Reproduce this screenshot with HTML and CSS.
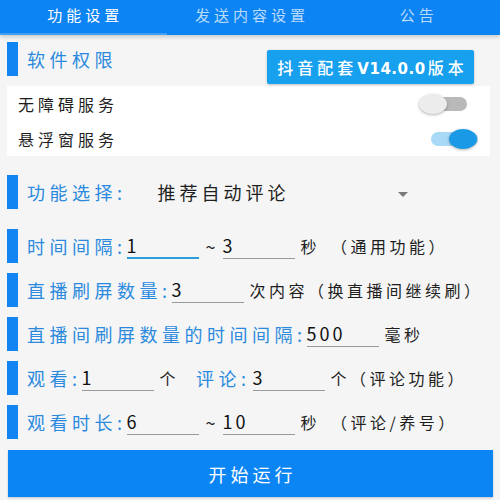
FILE: index.html
```html
<!DOCTYPE html>
<html lang="zh-CN">
<head>
<meta charset="utf-8">
<title>功能设置</title>
<link rel="stylesheet" href="styles.css">
</head>
<body>
<nav class="tabs">
  <div class="tab active">功能设置</div>
  <div class="tab">发送内容设置</div>
  <div class="tab">公告</div>
</nav>
<main class="main">
  <div class="section-head">
    <span class="bar"></span>
    <span class="label">软件权限</span>
    <button class="version-btn">抖音配套<span class="latin">V14.0.0</span>版本</button>
  </div>
  <div class="card">
    <div class="switch-row">
      <span class="switch-text">无障碍服务</span>
      <span class="switch off"><span class="track"></span><span class="thumb"></span></span>
    </div>
    <div class="switch-row">
      <span class="switch-text">悬浮窗服务</span>
      <span class="switch on"><span class="track"></span><span class="thumb"></span></span>
    </div>
  </div>

  <div class="row row-first">
    <span class="bar"></span>
    <span class="label">功能选择:</span>
    <div class="spinner">
      <span class="spinner-value">推荐自动评论</span>
      <span class="arrow"></span>
    </div>
  </div>

  <div class="row row-second">
    <span class="bar"></span>
    <span class="label">时间间隔:</span>
    <span class="field focused">1</span>
    <span class="tilde">~</span>
    <span class="field">3</span>
    <span class="unit">秒</span>
    <span class="note">（通用功能）</span>
  </div>

  <div class="row">
    <span class="bar"></span>
    <span class="label">直播刷屏数量:</span>
    <span class="field">3</span>
    <span class="unit">次内容（换直播间继续刷）</span>
  </div>

  <div class="row">
    <span class="bar"></span>
    <span class="label">直播间刷屏数量的时间间隔:</span>
    <span class="field">500</span>
    <span class="unit">毫秒</span>
  </div>

  <div class="row">
    <span class="bar"></span>
    <span class="label">观看:</span>
    <span class="field">1</span>
    <span class="unit">个</span>
    <span class="label label-inline">评论:</span>
    <span class="field field-tight">3</span>
    <span class="unit">个（评论功能）</span>
  </div>

  <div class="row">
    <span class="bar"></span>
    <span class="label">观看时长:</span>
    <span class="field">6</span>
    <span class="tilde">~</span>
    <span class="field">10</span>
    <span class="unit">秒</span>
    <span class="note">（评论/养号）</span>
  </div>

  <button class="start-btn">开始运行</button>
</main>
</body>
</html>
```

FILE: styles.css
```css
* {
  box-sizing: border-box;
}

html, body {
  margin: 0;
  padding: 0;
}

body {
  width: 500px;
  height: 500px;
  overflow: hidden;
  background: #f5f5f5;
  font-family: "Noto Sans CJK SC", "Noto Sans", sans-serif;
  color: #1e1e1e;
}

/* ---------- tabs ---------- */
.tabs {
  display: flex;
  height: 35px;
  background: #0c84f3;
  box-shadow: 0 2px 4px rgba(0, 0, 0, 0.18);
  position: relative;
  z-index: 1;
}

.tab {
  flex: 1;
  display: flex;
  justify-content: center;
  align-items: center;
  padding-bottom: 6px;
  padding-left: 4px;
  font-size: 15px;
  letter-spacing: 4px;
  color: rgba(255, 255, 255, 0.72);
}

.tab.active {
  color: #ffffff;
  border-bottom: 2px solid rgba(255, 255, 255, 0.22);
  padding-bottom: 4px;
}

/* ---------- main ---------- */
.main {
  padding: 0 8px 0 7px;
}

.bar {
  flex: none;
  width: 11px;
  height: 34px;
  background: #1385f2;
}

.label {
  margin-left: 9px;
  font-size: 18px;
  line-height: 34px;
  letter-spacing: 4.5px;
  color: #2b8ade;
  white-space: nowrap;
}

.section-head {
  display: flex;
  align-items: flex-start;
  margin-top: 7px;
}

.version-btn {
  margin: 8px 18px 0 auto;
  width: 207px;
  height: 34px;
  border: none;
  border-radius: 2px;
  background: #17a0ee;
  color: #ffffff;
  font-family: "Noto Sans CJK SC", "Noto Sans", sans-serif;
  font-size: 16px;
  font-weight: 500;
  letter-spacing: 4px;
  padding: 0 0 0 4px;
  box-shadow: 0 1px 3px rgba(0, 0, 0, 0.2);
  white-space: nowrap;
}

.version-btn .latin {
  font-family: "DejaVu Sans", sans-serif;
  font-weight: bold;
  font-size: 15px;
  letter-spacing: 0.5px;
  margin-right: 2px;
}

.card {
  margin: 2px 2px 0 0;
  background: #ffffff;
}

.switch-row {
  display: flex;
  align-items: center;
  justify-content: space-between;
  height: 35px;
  padding-left: 11px;
}

.switch-text {
  font-size: 16px;
  letter-spacing: 4px;
  color: #1e1e1e;
}

.switch {
  display: flex;
  align-items: center;
  width: 58px;
  height: 20px;
}

.switch.off {
  margin-right: 23px;
}

.switch.on {
  margin-right: 13px;
  justify-content: flex-end;
}

.track {
  display: block;
  width: 47px;
  height: 14px;
  border-radius: 7px;
}

.thumb {
  display: block;
  width: 28px;
  height: 20px;
  border-radius: 50%;
  box-shadow: 0 1px 3px rgba(0, 0, 0, 0.3);
}

.switch.off .track {
  background: #b9b9b9;
  margin-left: 11px;
  order: 2;
  margin-left: -27px;
}

.switch.off .thumb {
  order: 1;
  background: #ececec;
  margin-left: 10px;
  position: relative;
  z-index: 1;
}

.switch.on .track {
  background: #a8d9f6;
}

.switch.on .thumb {
  background: #1a9ae6;
  margin-left: -29px;
}

/* ---------- form rows ---------- */
.row {
  display: flex;
  align-items: center;
  height: 34px;
  margin-top: 10px;
}

.row-first {
  margin-top: 19px;
}

.row-second {
  margin-top: 20px;
}

.spinner {
  display: flex;
  justify-content: space-between;
  align-items: center;
  width: 257px;
  margin-left: 31px;
  padding-right: 7px;
}

.spinner-value {
  font-size: 18px;
  letter-spacing: 4px;
  color: #1e1e1e;
}

.arrow {
  width: 0;
  height: 0;
  margin-top: 4px;
  border-left: 5.5px solid transparent;
  border-right: 5.5px solid transparent;
  border-top: 5px solid #7a7a7a;
}

.field {
  flex: none;
  width: 72px;
  height: 26px;
  line-height: 24px;
  font-size: 18px;
  letter-spacing: 3px;
  color: #111111;
  border-bottom: 1.5px solid #9a9a9a;
}

.field.focused {
  border-bottom: 2px solid #2b9fd9;
}

.field-tight {
  margin-left: 2px;
}

.label-inline {
  margin-left: 17px;
}

.tilde {
  flex: none;
  width: 24px;
  text-align: center;
  font-size: 18px;
  color: #222222;
}

.unit {
  margin-left: 6px;
  font-size: 16px;
  letter-spacing: 3.5px;
  color: #1e1e1e;
  white-space: nowrap;
}

.note {
  margin-left: 11px;
  font-size: 16px;
  letter-spacing: 3.5px;
  color: #1e1e1e;
  white-space: nowrap;
}

.start-btn {
  display: block;
  width: 485px;
  height: 47px;
  margin: 11px 0 0 1px;
  border: none;
  background: #0b84f4;
  color: #ffffff;
  font-family: "Noto Sans CJK SC", "Noto Sans", sans-serif;
  font-size: 18px;
  letter-spacing: 4px;
  padding: 0 0 0 4px;
  box-shadow: 0 1px 2px rgba(0, 0, 0, 0.2);
}
```
